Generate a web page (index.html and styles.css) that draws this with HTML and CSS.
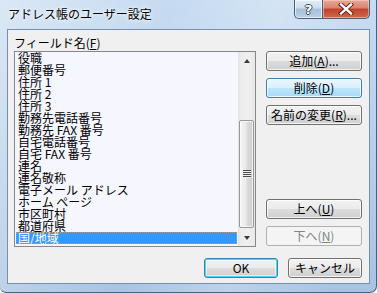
FILE: index.html
```html
<!DOCTYPE html>
<html lang="ja">
<head>
<meta charset="utf-8">
<link rel="stylesheet" href="styles.css">
</head>
<body>
<div class="window">
  <div class="titlebar">
    <span class="title">アドレス帳のユーザー設定</span>
    <div class="caption-btns">
      <div class="cbtn help"><span>?</span></div>
      <div class="cbtn close">
        <svg width="16" height="12" viewBox="0 0 16 12"><path d="M3 1.5 L13 10.5 M13 1.5 L3 10.5" stroke="#5a1a10" stroke-width="4.2" stroke-linecap="square"/><path d="M3 1.5 L13 10.5 M13 1.5 L3 10.5" stroke="#ffffff" stroke-width="2.4" stroke-linecap="square"/></svg>
      </div>
    </div>
  </div>
  <div class="client">
    <div class="label">フィールド名(<u>F</u>)</div>
    <div class="main">
      <div class="listbox">
        <ul class="items">
          <li>役職</li>
          <li>郵便番号</li>
          <li>住所 1</li>
          <li>住所 2</li>
          <li>住所 3</li>
          <li>勤務先電話番号</li>
          <li>勤務先 FAX 番号</li>
          <li>自宅電話番号</li>
          <li>自宅 FAX 番号</li>
          <li>連名</li>
          <li>連名敬称</li>
          <li>電子メール アドレス</li>
          <li>ホーム ページ</li>
          <li>市区町村</li>
          <li>都道府県</li>
          <li class="selected">国/地域</li>
        </ul>
        <div class="scrollbar">
          <div class="sb-arrow"><span class="tri up"></span></div>
          <div class="sb-track"><div class="sb-thumb"><span class="grip"></span></div></div>
          <div class="sb-arrow"><span class="tri down"></span></div>
        </div>
      </div>
      <div class="side">
        <div class="group">
          <div class="btn">追加(<u>A</u>)...</div>
          <div class="btn hover">削除(<u>D</u>)</div>
          <div class="btn">名前の変更(<u>R</u>)...</div>
        </div>
        <div class="group bottom">
          <div class="btn">上へ(<u>U</u>)</div>
          <div class="btn disabled">下へ(<u>N</u>)</div>
        </div>
      </div>
    </div>
    <div class="footer">
      <div class="btn default wide">OK</div>
      <div class="btn wide">キャンセル</div>
    </div>
  </div>
</div>
</body>
</html>
```

FILE: styles.css
```css
* { box-sizing: border-box; }
html, body { margin: 0; padding: 0; }
body {
  width: 377px;
  height: 293px;
  overflow: hidden;
  font-family: "Noto Sans CJK JP", "Liberation Sans", sans-serif;
  font-size: 12px;
  color: #000;
  background: #ffffff;
}
.window {
  width: 377px;
  height: 293px;
  border: 1px solid #4a6282;
  border-top: none;
  border-left: none;
  border-radius: 0 0 7px 6px;
  background:
    linear-gradient(100deg, rgba(255,255,255,0.35) 0%, rgba(255,255,255,0) 40%, rgba(255,255,255,0.25) 65%, rgba(255,255,255,0) 90%),
    linear-gradient(180deg, #c6dbf1 0%, #b7cfea 50%, #a8c3e2 100%);
  display: flex;
  flex-direction: column;
}
.titlebar {
  height: 29px;
  display: flex;
  align-items: flex-start;
  padding-left: 8px;
}
.title {
  margin-top: 6px;
  line-height: 16px;
  font-size: 12px;
  text-shadow: 0 0 6px rgba(255,255,255,0.9), 0 0 3px rgba(255,255,255,0.9);
}
.caption-btns {
  margin-left: auto;
  margin-right: 6px;
  display: flex;
  height: 19px;
}
.cbtn {
  height: 19px;
  display: flex;
  align-items: center;
  justify-content: center;
  border: 1px solid #4c5f78;
  border-top: none;
}
.help {
  width: 28px;
  border-radius: 0 0 0 5px;
  border-right: none;
  background: linear-gradient(180deg, #e2ecf7 0%, #cddcee 45%, #a9bfd9 50%, #bcd0e6 100%);
  box-shadow: inset 0 0 0 1px rgba(255,255,255,0.6);
}
.help span {
  font-family: "DejaVu Sans", sans-serif;
  font-weight: bold;
  font-size: 13px;
  color: #fff;
  line-height: 13px;
  text-shadow: 1px 0 0 #3d4e66, -1px 0 0 #3d4e66, 0 1px 0 #3d4e66, 0 -1px 0 #3d4e66;
}
.close {
  width: 48px;
  border-radius: 0 0 5px 0;
  background: linear-gradient(180deg, #e9a899 0%, #d9826f 45%, #c2402a 50%, #cf6a4f 100%);
  box-shadow: inset 0 0 0 1px rgba(255,220,210,0.5);
}
.client {
  margin-left: 7px;
  width: 363px;
  height: 255px;
  border: 1px solid #7890ad;
  background: #f0f0f0;
  padding: 6px 7px 0 6px;
  display: flex;
  flex-direction: column;
}
.label {
  height: 15px;
  line-height: 13px;
  padding-left: 0;
}
u { text-decoration: underline; text-underline-offset: 1px; }
.main {
  display: flex;
  gap: 10px;
  height: 196px;
}
.listbox {
  width: 242px;
  height: 196px;
  border: 1px solid #828790;
  background: #f6f6fe;
  display: flex;
}
.items {
  list-style: none;
  margin: 0;
  padding: 0 1px 0 1px;
  flex: 1;
}
.items li {
  height: 12px;
  line-height: 12px;
  padding-left: 2px;
  white-space: nowrap;
}
.items li.selected {
  background: #3399ff;
  color: #fff;
  outline: 1px dotted #f08a2a;
  outline-offset: -1px;
}
.scrollbar {
  width: 17px;
  display: flex;
  flex-direction: column;
  background: linear-gradient(90deg, #e2e2e2 0%, #ececec 15%, #f0f0f0 60%, #e8e8e8 100%);
}
.sb-arrow {
  height: 17px;
  display: flex;
  align-items: center;
  justify-content: center;
}
.tri {
  width: 0;
  height: 0;
  border-left: 3.5px solid transparent;
  border-right: 3.5px solid transparent;
}
.tri.up { border-bottom: 4px solid #3a3a3a; }
.tri.down { border-top: 4px solid #3a3a3a; }
.sb-track {
  flex: 1;
  display: flex;
  flex-direction: column;
}
.sb-thumb {
  margin: 51px 1px 0 1px;
  height: 108px;
  border: 1px solid #979797;
  border-radius: 2px;
  background: linear-gradient(90deg, #f4f4f4 0%, #ebebeb 45%, #dbdbdb 55%, #cdcdcd 100%);
  box-shadow: inset 0 0 0 1px rgba(255,255,255,0.7);
  display: flex;
  align-items: center;
  justify-content: center;
}
.grip {
  width: 8px;
  height: 8px;
  background: repeating-linear-gradient(180deg, #4a4a4a 0 1px, #f0f0f0 1px 2px);
}
.side {
  width: 96px;
  display: flex;
  flex-direction: column;
  justify-content: space-between;
}
.group {
  display: flex;
  flex-direction: column;
  gap: 7px;
}
.group.bottom { margin-bottom: 1px; }
.btn {
  height: 20px;
  border: 1px solid #707070;
  border-radius: 3px;
  background: linear-gradient(180deg, #f2f2f2 0%, #ebebeb 50%, #dddddd 50%, #cfcfcf 100%);
  box-shadow: inset 0 0 0 1px rgba(255,255,255,0.75);
  display: flex;
  align-items: center;
  justify-content: center;
  line-height: 14px;
  white-space: nowrap;
}
.btn.hover {
  border-color: #3c7fb1;
  background: linear-gradient(180deg, #eaf6fd 0%, #d9f0fc 50%, #bee6fd 50%, #a7d9f5 100%);
}
.btn.disabled {
  border-color: #adb2b5;
  background: #f4f4f4;
  color: #838383;
  box-shadow: none;
}
.btn.default {
  border-color: #3c7fb1;
  box-shadow: inset 0 0 0 1px #48d8fb, inset 0 0 0 2px rgba(255,255,255,0.5);
}
.footer {
  margin-top: 11px;
  display: flex;
  justify-content: flex-end;
  gap: 10px;
}
.btn.wide { width: 74px; }
```
